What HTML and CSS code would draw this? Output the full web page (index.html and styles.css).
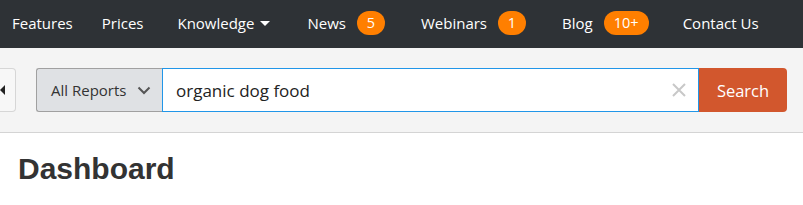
FILE: index.html
```html
<!DOCTYPE html>
<html>
<head>
<meta charset="utf-8">
<link rel="stylesheet" href="styles.css">
</head>
<body>
<nav class="topnav">
  <a class="nav-item tight">Features</a>
  <a class="nav-item">Prices</a>
  <a class="nav-item loose">Knowledge <span class="caret"></span></a>
  <a class="nav-item mid">News <span class="badge">5</span></a>
  <a class="nav-item mid">Webinars <span class="badge">1</span></a>
  <a class="nav-item">Blog <span class="badge wide">10+</span></a>
  <a class="nav-item">Contact Us</a>
</nav>
<div class="searchbar">
  <button class="toggle"><span class="tri"></span></button>
  <div class="search-group">
    <div class="select">All Reports
      <svg class="chev" width="14" height="9" viewBox="0 0 14 9"><path d="M1.5 1.5 L7 7 L12.5 1.5" fill="none" stroke="#555" stroke-width="2"/></svg>
    </div>
    <div class="input">
      <span class="query">organic dog food</span>
      <svg class="clear" width="14" height="14" viewBox="0 0 14 14"><path d="M1 1 L13 13 M13 1 L1 13" stroke="#c8c8c8" stroke-width="2"/></svg>
    </div>
    <button class="btn-search">Search</button>
  </div>
</div>
<main class="content">
  <h1 class="title">Dashboard</h1>
</main>
</body>
</html>
```
FILE: styles.css
```css
* { box-sizing: border-box; }
body { margin: 0; background: #fff; font-family: "Open Sans", "Noto Sans", sans-serif; }
.topnav {
  height: 48px;
  background: #2e3236;
  display: flex;
  align-items: center;
  padding-left: 12px;
  padding-bottom: 3px;
}
.nav-item {
  color: #fff;
  font-size: 15px;
  display: flex;
  align-items: center;
  margin-right: 34px;
  white-space: nowrap;
}
.nav-item.tight { margin-right: 29px; }
.nav-item.loose { margin-right: 37px; }
.nav-item.mid { margin-right: 36px; }
.caret {
  display: inline-block;
  width: 0; height: 0;
  border-left: 5px solid transparent;
  border-right: 5px solid transparent;
  border-top: 5px solid #fff;
  margin-left: 6px;
  margin-top: 2px;
}
.badge {
  display: inline-flex;
  align-items: center;
  justify-content: center;
  background: #ff7f00;
  color: #fff;
  border-radius: 12px;
  height: 24px;
  min-width: 28px;
  padding: 0 8px;
  margin-left: 11px;
  font-size: 14.5px;
}
.badge.wide { min-width: 45px; }
.searchbar {
  background: #f4f4f4;
  border-bottom: 1px solid #d4d4d4;
  height: 85px;
  display: flex;
  align-items: center;
}
.toggle {
  width: 16px;
  height: 44px;
  border: 1px solid #d6d6d6;
  border-left: none;
  border-radius: 0 4px 4px 0;
  background: #f7f7f7;
  padding: 0;
  display: flex;
  align-items: center;
  margin-right: 20px;
}
.tri {
  width: 0; height: 0;
  border-top: 5px solid transparent;
  border-bottom: 5px solid transparent;
  border-right: 5px solid #222;
}
.search-group {
  display: flex;
  height: 44px;
}
.select {
  width: 126px;
  background: #dfe1e4;
  border: 1px solid #a0a0a0;
  border-right: none;
  border-radius: 3px 0 0 3px;
  display: flex;
  align-items: center;
  padding-left: 14px;
  font-size: 15px;
  color: #333;
}
.chev { margin-left: 11px; }
.input {
  width: 537px;
  background: #fff;
  border: 1px solid #2196e8;
  display: flex;
  align-items: center;
  padding-left: 13px;
  padding-right: 12px;
  font-size: 17px;
  color: #222;
}
.query { flex: 1; }
.btn-search {
  width: 88px;
  background: #d2572d;
  color: #fff;
  border: none;
  border-radius: 0 4px 4px 0;
  font-family: "Open Sans", sans-serif;
  font-size: 16.5px;
  padding: 0;
}
.content { padding: 0 18px; }
.title {
  margin: 19px 0 0;
  font-family: "Liberation Sans", Arial, sans-serif;
  font-size: 30px;
  font-weight: bold;
  color: #333;
}
```
